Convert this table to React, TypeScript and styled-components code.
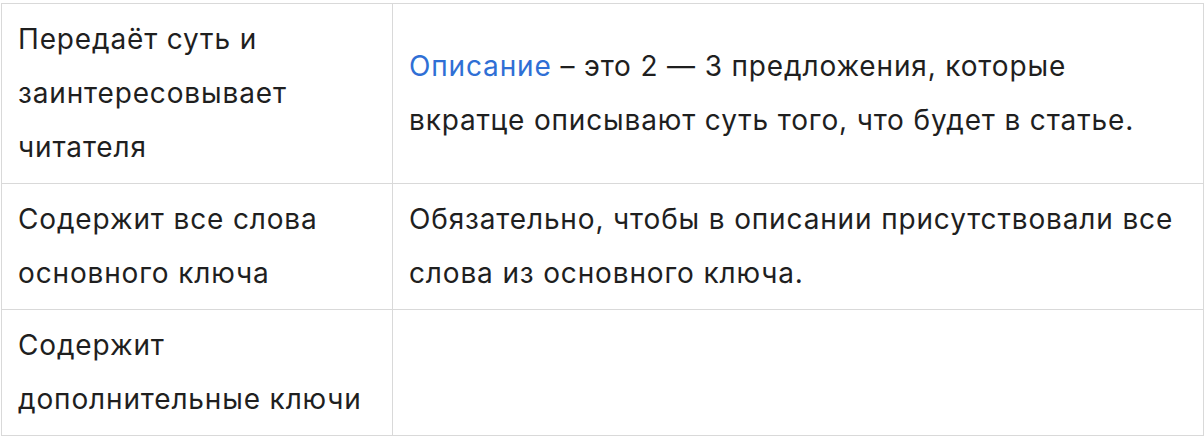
import styled, { createGlobalStyle } from 'styled-components';

const GlobalStyle = createGlobalStyle`
	html, body {
		margin: 0;
		padding: 0;
		background: #ffffff;
	}
	body {
		font-family: Inter, "Noto Sans", "Liberation Sans", sans-serif;
		color: #1f1f1f;
	}
`;

const Page = styled.div`
	padding: 3px 1px 0 1px;
`;

const Table = styled.table`
	width: 1202px;
	border-collapse: collapse;
	table-layout: fixed;
	font-size: 28px;
	line-height: 54px;
	letter-spacing: 0.85px;
`;

const Col = styled.col<{ $wide?: boolean }>`
	width: ${(p) => (p.$wide ? '811px' : '391px')};
`;

const Cell = styled.td`
	box-sizing: border-box;
	border: 1px solid #d9d9d9;
	padding: 8px 10px 9px 16px;
	vertical-align: middle;
	color: #1f1f1f;
	white-space: nowrap;
`;

const Link = styled.a`
	color: #2f6fd5;
	text-decoration: none;
`;

const rows = [
	{
		title: ['Передаёт суть и', 'заинтересовывает', 'читателя'],
		text: (
			<>
				<Link href="#">Описание</Link> – это 2 — 3 предложения, которые
				<br />
				вкратце описывают суть того, что будет в статье.
			</>
		),
	},
	{
		title: ['Содержит все слова', 'основного ключа'],
		text: (
			<>
				Обязательно, чтобы в описании присутствовали все
				<br />
				слова из основного ключа.
			</>
		),
	},
	{
		title: ['Содержит', 'дополнительные ключи'],
		text: null,
	},
];

export default function App() {
	return (
		<Page>
			<GlobalStyle />
			<Table>
				<colgroup>
					<Col />
					<Col $wide />
				</colgroup>
				<tbody>
					{rows.map((row, index) => (
						<tr key={index}>
							<Cell>
								{row.title.map((line, i) => (
									<span key={i}>
										{line}
										{i < row.title.length - 1 ? <br /> : null}
									</span>
								))}
							</Cell>
							<Cell>{row.text}</Cell>
						</tr>
					))}
				</tbody>
			</Table>
		</Page>
	);
}
